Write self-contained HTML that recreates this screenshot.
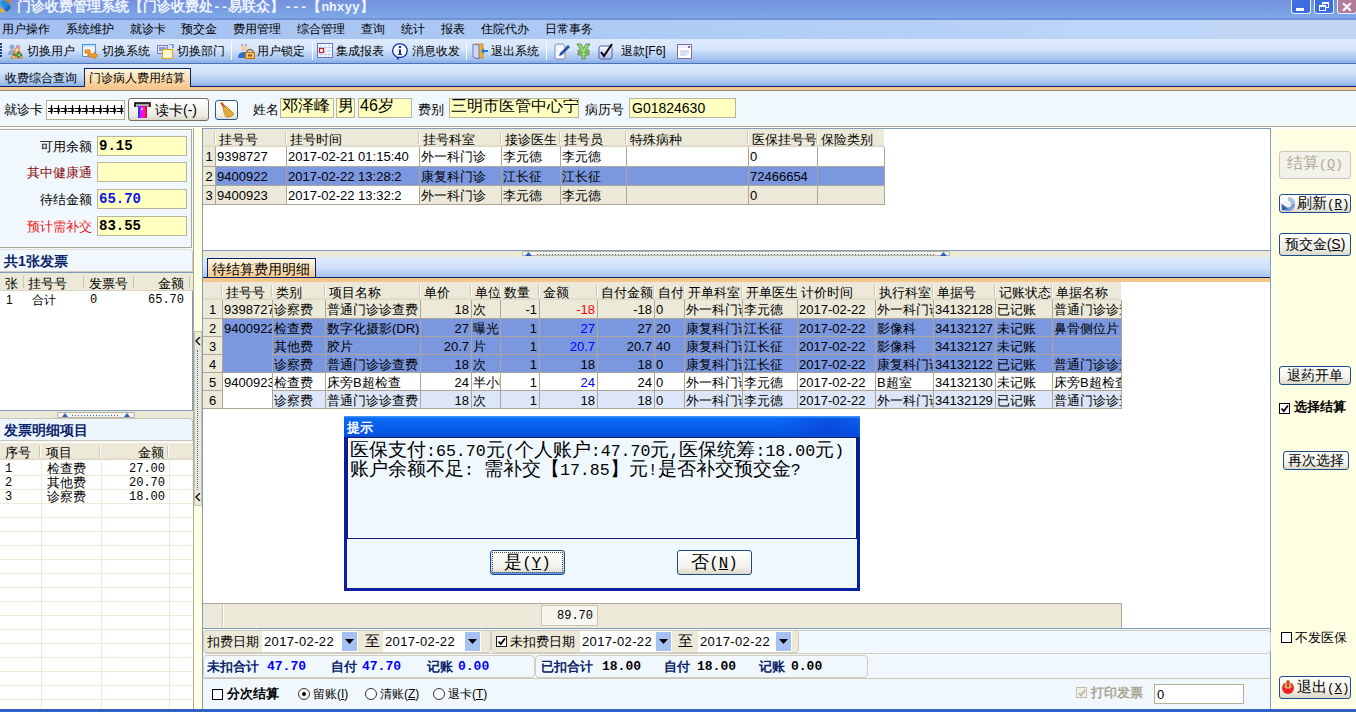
<!DOCTYPE html><html><head><meta charset="utf-8"><style>
*{margin:0;padding:0;box-sizing:border-box}
html,body{width:1356px;height:712px;overflow:hidden;background:#F0F7FD;font-family:"Liberation Sans",sans-serif;font-size:12px;color:#000}
div{position:absolute}
.t{white-space:nowrap;line-height:12px}
.m{font-family:"Liberation Mono",monospace}
</style></head><body>
<div class="" style="left:0px;top:0px;width:1356px;height:18px;background:linear-gradient(#7590DC,#7DA9E6)"></div>
<div class="" style="left:0px;top:18px;width:1356px;height:2px;background:#7191DC"></div>
<svg style="position:absolute;left:0;top:0" width="14" height="14"><path d="M0 2 L5 0 L9 4 L4 9 Z" fill="#1A8FD8"/><path d="M5 0 L10 0 L11 5 Z" fill="#E07A1A"/><path d="M0 8 L4 10 L5 13 L0 12 Z" fill="#E0B030"/><path d="M4 9 L9 4 L11 8 L7 12Z" fill="#1E6CC0"/></svg>
<div class="t" style="left:17px;top:-1px;color:#EEF4FF;font-weight:bold;font-size:14px;line-height:14px">门诊收费管理系统【门诊收费处<span class="m" style="font-size:12.8px">--</span>易联众】<span class="m" style="font-size:12.8px">---</span>【<span class="m" style="font-size:12.8px">nhxyy</span>】</div>
<div class="" style="left:1291px;top:0px;width:20px;height:14px;background:#3D6EE0;border:1px solid #E8F0FF;border-top:none;border-radius:0 0 3px 3px"></div>
<div class="" style="left:1314px;top:0px;width:20px;height:14px;background:#3D6EE0;border:1px solid #E8F0FF;border-top:none;border-radius:0 0 3px 3px"></div>
<div class="" style="left:1337px;top:0px;width:20px;height:14px;background:#B47A9A;border:1px solid #E8F0FF;border-top:none;border-radius:0 0 3px 3px"></div>
<div class="" style="left:1296px;top:8px;width:8px;height:3px;background:#fff"></div>
<div class="" style="left:1322px;top:2px;width:7px;height:6px;border:1px solid #fff;border-top-width:2px"></div>
<div class="" style="left:1319px;top:5px;width:7px;height:6px;border:1px solid #fff;border-top-width:2px;background:#3D6EE0"></div>
<div class="t" style="left:1341px;top:0px;color:#fff;font-size:14px;line-height:14px;font-weight:bold">✕</div>
<div class="" style="left:0px;top:20px;width:1356px;height:19px;background:linear-gradient(90deg,#A4C0F0 0%,#AAC6F2 30%,#B0CDF6 55%,#B8D2F7 75%,#BDD5F8 80%,#BDD5F8 89%,#C3D7F5 90%,#C3D7F5 100%)"></div>
<div class="t" style="left:2px;top:23px;">用户操作</div>
<div class="t" style="left:66px;top:23px;">系统维护</div>
<div class="t" style="left:130px;top:23px;">就诊卡</div>
<div class="t" style="left:181px;top:23px;">预交金</div>
<div class="t" style="left:233px;top:23px;">费用管理</div>
<div class="t" style="left:297px;top:23px;">综合管理</div>
<div class="t" style="left:361px;top:23px;">查询</div>
<div class="t" style="left:401px;top:23px;">统计</div>
<div class="t" style="left:441px;top:23px;">报表</div>
<div class="t" style="left:481px;top:23px;">住院代办</div>
<div class="t" style="left:545px;top:23px;">日常事务</div>
<div class="" style="left:0px;top:39px;width:1356px;height:24px;background:linear-gradient(#DFEBFD 0%,#D5E5FB 45%,#C4D9F7 55%,#A9C7F1 80%,#88ADE6 100%)"></div>
<div class="" style="left:0px;top:63px;width:1356px;height:1px;background:#4F72B6"></div>
<div class="t" style="left:27px;top:45px;">切换用户</div>
<div class="t" style="left:102px;top:45px;">切换系统</div>
<div class="t" style="left:177px;top:45px;">切换部门</div>
<div class="t" style="left:257px;top:45px;">用户锁定</div>
<div class="t" style="left:336px;top:45px;">集成报表</div>
<div class="t" style="left:412px;top:45px;">消息收发</div>
<div class="t" style="left:491px;top:45px;">退出系统</div>
<div class="t" style="left:621px;top:45px;">退款[F6]</div>
<div class="" style="left:231px;top:42px;width:1px;height:18px;background:#7E9BD0;border-right:1px solid #fff"></div>
<div class="" style="left:312px;top:42px;width:1px;height:18px;background:#7E9BD0;border-right:1px solid #fff"></div>
<div class="" style="left:466px;top:42px;width:1px;height:18px;background:#7E9BD0;border-right:1px solid #fff"></div>
<div class="" style="left:546px;top:42px;width:1px;height:18px;background:#7E9BD0;border-right:1px solid #fff"></div>
<div class="" style="left:0px;top:43px;width:2px;height:2px;background:#1B3F8C"></div>
<div class="" style="left:0px;top:46px;width:2px;height:2px;background:#1B3F8C"></div>
<div class="" style="left:0px;top:49px;width:2px;height:2px;background:#1B3F8C"></div>
<div class="" style="left:0px;top:52px;width:2px;height:2px;background:#1B3F8C"></div>
<div class="" style="left:0px;top:55px;width:2px;height:2px;background:#1B3F8C"></div>
<svg style="position:absolute;left:7px;top:44px" width="17" height="15" viewBox="0 0 17 15"><circle cx="5" cy="3" r="2.5" fill="#8FA8D0"/><path d="M1 11 Q1 6 5 6 Q8 6 8 9 L8 11Z" fill="#8FA8D0"/><circle cx="11" cy="3" r="2.3" fill="#C8A0C0"/><path d="M4 14 L8 7 L12 7 L15 12 L15 14Z" fill="#FCE8D0" stroke="#E07A20" stroke-width="1.2"/><circle cx="10" cy="6" r="2.2" fill="#FCE0C0" stroke="#E07A20"/><path d="M7 10 H11 V8 L15 11 L11 14 V12 H7Z" fill="#7CD860" stroke="#2A4A1A" stroke-width=".9"/></svg>
<svg style="position:absolute;left:82px;top:44px" width="17" height="16" viewBox="0 0 17 16"><rect x=".5" y=".5" width="13" height="12" fill="#F3F2EC" stroke="#3C96F0"/><rect x="1" y="1" width="12" height="2" fill="#C8E0FA"/><path d="M3 6 H8 V10 H12 V8 L16 11.5 L12 15 V13 H6 V9 H3Z" fill="#F0A030" stroke="#D07010" stroke-width=".8"/></svg>
<svg style="position:absolute;left:157px;top:44px" width="17" height="15" viewBox="0 0 17 15"><rect x=".5" y="1.5" width="10" height="8" fill="#DDE6F8" stroke="#8C78B8"/><path d="M2 4 H9 M2 6 H7" stroke="#3060C8"/><rect x="5.5" y="5.5" width="10" height="9" fill="#FFF4B0" stroke="#E0A020"/><path d="M8 8 V14 M11 8 V14 M6 11 H15" stroke="#fff"/><path d="M12 0 L16 0 L16 4" stroke="#3060C8" fill="none"/></svg>
<svg style="position:absolute;left:238px;top:43px" width="17" height="16" viewBox="0 0 17 16"><circle cx="6" cy="5" r="3" fill="#F4C8A8"/><path d="M3 3 Q6 -1 9 3 L9 2 Q6 0 3 2Z" fill="#5A2040"/><path d="M0 15 Q0 9 6 9 Q10 9 11 13 L11 15Z" fill="#2E6FC8"/><path d="M9 10 V8 Q12 5 15 8 V10" stroke="#8A6A40" fill="none" stroke-width="1.3"/><rect x="7.5" y="9.5" width="9" height="6" fill="#F8C060" stroke="#C07010"/><rect x="10" y="11.5" width="4" height="2" fill="#8A5A20"/></svg>
<svg style="position:absolute;left:317px;top:43px" width="17" height="16" viewBox="0 0 17 16"><rect x=".5" y=".5" width="15" height="14" fill="#fff" stroke="#7070C0"/><path d="M4 1 V14 M8 1 V14 M12 1 V14 M1 4.5 H15 M1 8 H15 M1 11.5 H15" stroke="#C0D0F0"/><rect x="2.5" y="5.5" width="4" height="4" fill="#fff" stroke="#C02020" stroke-width="1.2"/></svg>
<svg style="position:absolute;left:392px;top:43px" width="16" height="17" viewBox="0 0 16 17"><path d="M8 .8 A7 6.8 0 1 1 6.5 14.2 L6 16 L4.5 13.6 A7 6.8 0 0 1 8 .8Z" fill="#fff" stroke="#1234A8" stroke-width="1.3"/><circle cx="8" cy="4" r="1.3" fill="#1234A8"/><path d="M6.5 6.5 H9 V11 H10 V12 H6 V11 H7 V7.5 H6.5Z" fill="#1234A8"/></svg>
<svg style="position:absolute;left:472px;top:43px" width="16" height="17" viewBox="0 0 16 17"><rect x="4" y="1" width="7" height="14" fill="#F0B030" stroke="#C09040"/><path d="M1 1 L7 2 L7 16 L1 14Z" fill="#C8DCF8" stroke="#8070A8"/><path d="M9 8 L12 5 V7 H16 V9 H12 V11Z" fill="#1E7CE0"/></svg>
<svg style="position:absolute;left:553px;top:43px" width="17" height="17" viewBox="0 0 17 17"><path d="M2 3 Q2 1 4 1 L10 1 L12 3 L12 15 Q12 16 11 16 L3 16 Q2 16 2 15Z" fill="#F4F6FA" stroke="#7A90B8"/><path d="M6 13 L7 10 L15 2 L17 4 L9 12Z" fill="#2A50A0"/></svg>
<svg style="position:absolute;left:576px;top:43px" width="15" height="17" viewBox="0 0 15 17"><path d="M1 1 H5 L7.5 5.5 L10 1 H14 L10 7 H13 V9 H9 V10 H13 V12 H9 V16 H6 V12 H2 V10 H6 V9 H2 V7 H5Z" fill="#90E070" stroke="#5A7A40" stroke-width=".8"/></svg>
<svg style="position:absolute;left:598px;top:43px" width="16" height="17" viewBox="0 0 16 17"><rect x="1" y="3" width="13" height="13" rx="2" fill="url(#gcb)" stroke="#4A60A8"/><defs><linearGradient id="gcb" x1="0" y1="0" x2="0" y2="1"><stop offset="0" stop-color="#fff"/><stop offset="1" stop-color="#A8B8E8"/></linearGradient></defs><path d="M3 9 L6 13 L14 1" stroke="#000" stroke-width="2" fill="none"/></svg>
<svg style="position:absolute;left:677px;top:43px" width="16" height="17" viewBox="0 0 16 17"><rect x=".5" y="1.5" width="14" height="14" fill="#fff" stroke="#8070A8"/><rect x="1" y="2" width="13" height="3" fill="#F0EEF8"/><rect x="11" y="3" width="2" height="2" fill="#8070A8"/><path d="M3 8 H12 M3 10 H12 M3 12 H10" stroke="#A8C0E8"/></svg>
<div class="" style="left:0px;top:64px;width:1356px;height:22px;background:linear-gradient(#DCE9FC 0%,#D0E1FA 40%,#B2CDF3 75%,#8AAFE8 100%)"></div>
<div class="" style="left:0px;top:86px;width:1356px;height:1px;background:#0A246A"></div>
<div class="" style="left:0px;top:87px;width:1356px;height:3px;background:#F4C88C"></div>
<div class="" style="left:0px;top:90px;width:1356px;height:1px;background:#8D8C7C"></div>
<div class="t" style="left:5px;top:72px;font-size:12px">收费综合查询</div>
<div class="" style="left:84px;top:68px;width:107px;height:19px;background:linear-gradient(#FFF6E2,#F8C98E);border:1px solid #0A246A;border-bottom:none"></div>
<div class="t" style="left:89px;top:72px;">门诊病人费用结算</div>
<div class="t" style="left:4px;top:103px;font-size:13px;line-height:13px">就诊卡</div>
<div class="" style="left:46px;top:100px;width:79px;height:20px;background:#fff;border:1px solid #B6AF98"></div>
<svg style="position:absolute;left:48px;top:105px" width="76" height="9" viewBox="0 0 76 9"><g stroke="#000" stroke-width="1.2" fill="none"><path d="M0 3.5 H76 M0 6.5 H76" stroke-dasharray="4 1.5 1.5 0" stroke-width="1"/><path d="M3.5 0 V9"/><path d="M10.5 0 V9"/><path d="M17.5 0 V9"/><path d="M24.5 0 V9"/><path d="M31.5 0 V9"/><path d="M38.5 0 V9"/><path d="M45.5 0 V9"/><path d="M52.5 0 V9"/><path d="M59.5 0 V9"/><path d="M66.5 0 V9"/><path d="M73.5 0 V9"/></g><g fill="#000"><rect x="2.5" y="3" width="2.2" height="4"/><rect x="9.5" y="3" width="2.2" height="4"/><rect x="16.5" y="3" width="2.2" height="4"/><rect x="23.5" y="3" width="2.2" height="4"/><rect x="30.5" y="3" width="2.2" height="4"/><rect x="37.5" y="3" width="2.2" height="4"/><rect x="44.5" y="3" width="2.2" height="4"/><rect x="51.5" y="3" width="2.2" height="4"/><rect x="58.5" y="3" width="2.2" height="4"/><rect x="65.5" y="3" width="2.2" height="4"/><rect x="72.5" y="3" width="2.2" height="4"/></g></svg>
<div class="" style="left:128px;top:98px;width:81px;height:23px;background:linear-gradient(#FFFFFF,#ECEBE3 80%,#D8D5C8);border:1px solid #706E5E;border-radius:3px"></div>
<div class="t" style="left:155px;top:103px;font-size:14px;line-height:14px">读卡(-)</div>
<svg style="position:absolute;left:134px;top:102px" width="17" height="17" viewBox="0 0 17 17"><path d="M1 5 V1 H16 V5" stroke="#000" stroke-width="1.5" fill="#909090"/><rect x="2" y="2" width="13" height="2" fill="#A8A8A8"/><rect x="4" y="4" width="9" height="12" fill="#F010F0"/><rect x="4" y="4" width="2" height="12" fill="#2040F0"/><rect x="11" y="4" width="2" height="12" fill="#F01010"/><circle cx="8" cy="7" r="1.2" fill="#C0C0C0"/><circle cx="15" cy="2" r=".8" fill="#E00"/></svg>
<div class="" style="left:215px;top:100px;width:23px;height:20px;background:linear-gradient(#FFFFFF,#F2F1EA 70%,#E2DFD2);border:1px solid #2C5598;border-radius:3px"></div>
<svg style="position:absolute;left:218px;top:102px" width="17" height="16" viewBox="0 0 17 16"><path d="M2 1 L4 0 L8 5 L6 7Z" fill="#C06020"/><path d="M5 6 L8 4 L16 12 Q13 16 8 15 Q6 12 5 6Z" fill="#E8B040" stroke="#B08020" stroke-width=".7"/><path d="M7 9 L12 14 M9 7 L14 12" stroke="#B08020" stroke-width=".6"/></svg>
<div class="t" style="left:253px;top:103px;font-size:13px;line-height:13px">姓名</div>
<div class="" style="left:280px;top:98px;width:54px;height:20px;background:#FFFFC0;border:1px solid #B9B59E"></div>
<div class="t" style="left:282px;top:98px;font-size:16px;line-height:16px">邓泽峰</div>
<div class="" style="left:336px;top:98px;width:19px;height:20px;background:#FFFFC0;border:1px solid #B9B59E"></div>
<div class="t" style="left:338px;top:98px;font-size:16px;line-height:16px">男</div>
<div class="" style="left:358px;top:98px;width:54px;height:20px;background:#FFFFC0;border:1px solid #B9B59E"></div>
<div class="t" style="left:360px;top:98px;font-size:16px;line-height:16px">46岁</div>
<div class="t" style="left:418px;top:103px;font-size:13px;line-height:13px">费别</div>
<div class="" style="left:449px;top:98px;width:130px;height:20px;background:#FFFFC0;border:1px solid #B9B59E;overflow:hidden"><div class="t" style="left:1px;top:-1px;font-size:16px;line-height:16px">三明市医管中心宁化</div></div>
<div class="t" style="left:585px;top:103px;font-size:13px;line-height:13px">病历号</div>
<div class="" style="left:629px;top:98px;width:107px;height:20px;background:#FFFFC0;border:1px solid #B9B59E"></div>
<div class="t" style="left:632px;top:101px;font-size:14px;line-height:14px">G01824630</div>
<div class="" style="left:0px;top:126px;width:1356px;height:1px;background:#ACA892"></div>
<div class="" style="left:0px;top:127px;width:1356px;height:1px;background:#FFFFFF"></div>
<div class="" style="left:0px;top:129px;width:192px;height:119px;background:#F0F7FD;border:1px solid #ACA899;border-left:none;box-shadow:inset 0 1px #fff"></div>
<div class="t" style="left:0px;top:140px;width:92px;text-align:right;font-size:13px;line-height:13px;color:#000">可用余额</div>
<div class="" style="left:97px;top:136px;width:90px;height:20px;background:#FFFFC0;border:1px solid #B9B59E"></div>
<div class="t m" style="left:99px;top:139px;color:#000;font-weight:bold;font-size:14px;line-height:14px">9.15</div>
<div class="t" style="left:0px;top:166px;width:92px;text-align:right;font-size:13px;line-height:13px;color:#8B0A0A">其中健康通</div>
<div class="" style="left:97px;top:162px;width:90px;height:20px;background:#FFFFC0;border:1px solid #B9B59E"></div>
<div class="t m" style="left:99px;top:165px;color:#000;font-weight:bold;font-size:14px;line-height:14px"></div>
<div class="t" style="left:0px;top:193px;width:92px;text-align:right;font-size:13px;line-height:13px;color:#000">待结金额</div>
<div class="" style="left:97px;top:189px;width:90px;height:20px;background:#FFFFC0;border:1px solid #B9B59E"></div>
<div class="t m" style="left:99px;top:192px;color:#0A14E6;font-weight:bold;font-size:14px;line-height:14px">65.70</div>
<div class="t" style="left:0px;top:220px;width:92px;text-align:right;font-size:13px;line-height:13px;color:#F01010">预计需补交</div>
<div class="" style="left:97px;top:216px;width:90px;height:20px;background:#FFFFC0;border:1px solid #B9B59E"></div>
<div class="t m" style="left:99px;top:219px;color:#000;font-weight:bold;font-size:14px;line-height:14px">83.55</div>
<div class="" style="left:0px;top:249px;width:193px;height:23px;background:#F0F7FD;border:1px solid #CFCCBD;border-left:none;border-top-color:#E4E2D8;border-radius:0 4px 0 0"></div>
<div class="t" style="left:4px;top:254px;color:#0A246A;font-weight:bold;font-size:14px;line-height:14px">共1张发票</div>
<div class="" style="left:0px;top:272px;width:193px;height:139px;background:#fff;border-top:1px solid #7F9DB9;border-right:1px solid #7F9DB9;border-bottom:1px solid #7F9DB9"></div>
<div class="" style="left:0px;top:273px;width:193px;height:18px;background:#ECE9D8;border-bottom:1px solid #D8D4C0"></div>
<div class="t" style="left:5px;top:277px;font-size:13px;line-height:13px">张</div>
<div class="t" style="left:28px;top:277px;font-size:13px;line-height:13px">挂号号</div>
<div class="t" style="left:89px;top:277px;font-size:13px;line-height:13px">发票号</div>
<div class="t" style="left:158px;top:277px;font-size:13px;line-height:13px">金额</div>
<div class="" style="left:23px;top:276px;width:1px;height:12px;background:#C8C5B0"></div>
<div class="" style="left:83px;top:276px;width:1px;height:12px;background:#C8C5B0"></div>
<div class="" style="left:133px;top:276px;width:1px;height:12px;background:#C8C5B0"></div>
<div class="" style="left:189px;top:276px;width:1px;height:12px;background:#C8C5B0"></div>
<div class="t" style="left:6px;top:294px;">1</div>
<div class="t" style="left:32px;top:294px;">合计</div>
<div class="t m" style="left:90px;top:294px;">0</div>
<div class="t m" style="left:148px;top:294px;">65.70</div>
<div class="" style="left:0px;top:411px;width:193px;height:7px;background:#ECE9D8"></div>
<div class="" style="left:57px;top:412px;width:78px;height:6px;border:1px solid #B9B6A4;background:#F4F3EC"></div>
<svg style="position:absolute;left:62px;top:413px" width="68" height="4" viewBox="0 0 68 4"><path d="M0 4 L3 0 L6 4Z M62 4 L65 0 L68 4Z" fill="#2F5FC8"/><path d="M10 2.5 H58" stroke="#3A6AD0" stroke-dasharray="1 2"/></svg>
<div class="" style="left:0px;top:418px;width:193px;height:23px;background:#EEF6FD;border:1px solid #C9C6B4;border-left:none;border-radius:0 4px 0 0"></div>
<div class="t" style="left:4px;top:423px;color:#0A246A;font-weight:bold;font-size:14px;line-height:14px">发票明细项目</div>
<div class="" style="left:0px;top:442px;width:194px;height:267px;background:#fff;border-right:1px solid #7F9DB9"></div>
<div class="" style="left:0px;top:443px;width:193px;height:17px;background:linear-gradient(#ECE9D8 85%,#D9D5C2)"></div>
<div class="t" style="left:5px;top:446px;font-size:13px;line-height:13px">序号</div>
<div class="t" style="left:46px;top:446px;font-size:13px;line-height:13px">项目</div>
<div class="t" style="left:138px;top:446px;font-size:13px;line-height:13px">金额</div>
<div class="" style="left:39px;top:446px;width:2px;height:11px;background:#CBC7B2;border-right:1px solid #fff"></div>
<div class="" style="left:99px;top:446px;width:2px;height:11px;background:#CBC7B2;border-right:1px solid #fff"></div>
<div class="" style="left:167px;top:446px;width:2px;height:11px;background:#CBC7B2;border-right:1px solid #fff"></div>
<div class="t m" style="left:5px;top:463px;font-size:12px;line-height:12px">1</div>
<div class="t" style="left:47px;top:462px;font-size:13px;line-height:13px">检查费</div>
<div class="t m" style="left:129px;top:463px;font-size:12px;line-height:12px">27.00</div>
<div class="t m" style="left:5px;top:477px;font-size:12px;line-height:12px">2</div>
<div class="t" style="left:47px;top:476px;font-size:13px;line-height:13px">其他费</div>
<div class="t m" style="left:129px;top:477px;font-size:12px;line-height:12px">20.70</div>
<div class="t m" style="left:5px;top:491px;font-size:12px;line-height:12px">3</div>
<div class="t" style="left:47px;top:490px;font-size:13px;line-height:13px">诊察费</div>
<div class="t m" style="left:129px;top:491px;font-size:12px;line-height:12px">18.00</div>
<div class="" style="left:0px;top:475px;width:193px;height:1px;background:#EDEAD9"></div>
<div class="" style="left:0px;top:489px;width:193px;height:1px;background:#EDEAD9"></div>
<div class="" style="left:0px;top:503px;width:193px;height:1px;background:#EDEAD9"></div>
<div class="" style="left:0px;top:517px;width:193px;height:1px;background:#EDEAD9"></div>
<div class="" style="left:0px;top:531px;width:193px;height:1px;background:#EDEAD9"></div>
<div class="" style="left:0px;top:545px;width:193px;height:1px;background:#EDEAD9"></div>
<div class="" style="left:0px;top:559px;width:193px;height:1px;background:#EDEAD9"></div>
<div class="" style="left:0px;top:573px;width:193px;height:1px;background:#EDEAD9"></div>
<div class="" style="left:0px;top:587px;width:193px;height:1px;background:#EDEAD9"></div>
<div class="" style="left:0px;top:601px;width:193px;height:1px;background:#EDEAD9"></div>
<div class="" style="left:0px;top:615px;width:193px;height:1px;background:#EDEAD9"></div>
<div class="" style="left:0px;top:629px;width:193px;height:1px;background:#EDEAD9"></div>
<div class="" style="left:0px;top:643px;width:193px;height:1px;background:#EDEAD9"></div>
<div class="" style="left:0px;top:657px;width:193px;height:1px;background:#EDEAD9"></div>
<div class="" style="left:0px;top:671px;width:193px;height:1px;background:#EDEAD9"></div>
<div class="" style="left:0px;top:685px;width:193px;height:1px;background:#EDEAD9"></div>
<div class="" style="left:0px;top:699px;width:193px;height:1px;background:#EDEAD9"></div>
<div class="" style="left:41px;top:460px;width:1px;height:249px;background:#EDEAD9"></div>
<div class="" style="left:101px;top:460px;width:1px;height:249px;background:#EDEAD9"></div>
<div class="" style="left:169px;top:460px;width:1px;height:249px;background:#EDEAD9"></div>
<div class="" style="left:194px;top:128px;width:8px;height:581px;background:#FFFFE3"></div>
<div class="" style="left:193px;top:128px;width:1px;height:581px;background:#ACA899"></div>
<div class="" style="left:194px;top:331px;width:8px;height:175px;background:#ECE9D8;border:1px solid #C9C6B4"></div>
<div class="" style="left:197px;top:350px;width:1px;height:140px;border-left:1px dotted #3A6AD0"></div>
<svg style="position:absolute;left:195px;top:337px" width="6" height="8" viewBox="0 0 6 8"><path d="M5 0 L1 4 L5 8" stroke="#000" stroke-width="1.3" fill="none"/></svg>
<svg style="position:absolute;left:195px;top:493px" width="6" height="8" viewBox="0 0 6 8"><path d="M5 0 L1 4 L5 8" stroke="#000" stroke-width="1.3" fill="none"/></svg>
<div class="" style="left:202px;top:128px;width:1069px;height:581px;background:#F0F7FD;border-left:1px solid #7F9DB9;border-right:1px solid #7F9DB9"></div>
<div class="" style="left:202px;top:128px;width:1069px;height:123px;background:#fff;border:1px solid #7F9DB9"></div>
<div class="" style="left:203px;top:129px;width:681px;height:18px;background:linear-gradient(#ECE9D8 85%,#D9D5C2)"></div>
<div class="" style="left:214px;top:132px;width:1px;height:12px;background:#CBC7B2;border-right:1px solid #fff;width:2px"></div>
<div class="t" style="left:219px;top:133px;font-size:13px;line-height:13px">挂号号</div>
<div class="" style="left:285px;top:132px;width:1px;height:12px;background:#CBC7B2;border-right:1px solid #fff;width:2px"></div>
<div class="t" style="left:290px;top:133px;font-size:13px;line-height:13px">挂号时间</div>
<div class="" style="left:418px;top:132px;width:1px;height:12px;background:#CBC7B2;border-right:1px solid #fff;width:2px"></div>
<div class="t" style="left:423px;top:133px;font-size:13px;line-height:13px">挂号科室</div>
<div class="" style="left:500px;top:132px;width:1px;height:12px;background:#CBC7B2;border-right:1px solid #fff;width:2px"></div>
<div class="t" style="left:505px;top:133px;font-size:13px;line-height:13px">接诊医生</div>
<div class="" style="left:559px;top:132px;width:1px;height:12px;background:#CBC7B2;border-right:1px solid #fff;width:2px"></div>
<div class="t" style="left:564px;top:133px;font-size:13px;line-height:13px">挂号员</div>
<div class="" style="left:625px;top:132px;width:1px;height:12px;background:#CBC7B2;border-right:1px solid #fff;width:2px"></div>
<div class="t" style="left:630px;top:133px;font-size:13px;line-height:13px">特殊病种</div>
<div class="" style="left:747px;top:132px;width:1px;height:12px;background:#CBC7B2;border-right:1px solid #fff;width:2px"></div>
<div class="t" style="left:752px;top:133px;font-size:13px;line-height:13px">医保挂号号</div>
<div class="" style="left:816px;top:132px;width:1px;height:12px;background:#CBC7B2;border-right:1px solid #fff;width:2px"></div>
<div class="t" style="left:821px;top:133px;font-size:13px;line-height:13px">保险类别</div>
<div class="" style="left:203px;top:147px;width:12px;height:19px;background:#ECE9D8"></div>
<div class="" style="left:216px;top:147px;width:70px;height:19px;background:#fff"></div>
<div class="" style="left:287px;top:147px;width:132px;height:19px;background:#fff"></div>
<div class="" style="left:420px;top:147px;width:81px;height:19px;background:#fff"></div>
<div class="" style="left:502px;top:147px;width:58px;height:19px;background:#fff"></div>
<div class="" style="left:561px;top:147px;width:65px;height:19px;background:#fff"></div>
<div class="" style="left:627px;top:147px;width:121px;height:19px;background:#fff"></div>
<div class="" style="left:749px;top:147px;width:68px;height:19px;background:#fff"></div>
<div class="" style="left:818px;top:147px;width:66px;height:19px;background:#fff"></div>
<div class="" style="left:203px;top:167px;width:12px;height:18px;background:#ECE9D8"></div>
<div class="" style="left:216px;top:167px;width:70px;height:18px;background:#7A97DF"></div>
<div class="" style="left:287px;top:167px;width:132px;height:18px;background:#7A97DF"></div>
<div class="" style="left:420px;top:167px;width:81px;height:18px;background:#7A97DF"></div>
<div class="" style="left:502px;top:167px;width:58px;height:18px;background:#7A97DF"></div>
<div class="" style="left:561px;top:167px;width:65px;height:18px;background:#7A97DF"></div>
<div class="" style="left:627px;top:167px;width:121px;height:18px;background:#7A97DF"></div>
<div class="" style="left:749px;top:167px;width:68px;height:18px;background:#7A97DF"></div>
<div class="" style="left:818px;top:167px;width:66px;height:18px;background:#7A97DF"></div>
<div class="" style="left:203px;top:186px;width:12px;height:18px;background:#ECE9D8"></div>
<div class="" style="left:216px;top:186px;width:70px;height:18px;background:#ECE9D8"></div>
<div class="" style="left:287px;top:186px;width:132px;height:18px;background:#fff"></div>
<div class="" style="left:420px;top:186px;width:81px;height:18px;background:#ECE9D8"></div>
<div class="" style="left:502px;top:186px;width:58px;height:18px;background:#ECE9D8"></div>
<div class="" style="left:561px;top:186px;width:65px;height:18px;background:#ECE9D8"></div>
<div class="" style="left:627px;top:186px;width:121px;height:18px;background:#ECE9D8"></div>
<div class="" style="left:749px;top:186px;width:68px;height:18px;background:#ECE9D8"></div>
<div class="" style="left:818px;top:186px;width:66px;height:18px;background:#ECE9D8"></div>
<div class="" style="left:215px;top:147px;width:1px;height:58px;background:#ACA899"></div>
<div class="" style="left:286px;top:147px;width:1px;height:58px;background:#ACA899"></div>
<div class="" style="left:419px;top:147px;width:1px;height:58px;background:#ACA899"></div>
<div class="" style="left:501px;top:147px;width:1px;height:58px;background:#ACA899"></div>
<div class="" style="left:560px;top:147px;width:1px;height:58px;background:#ACA899"></div>
<div class="" style="left:626px;top:147px;width:1px;height:58px;background:#ACA899"></div>
<div class="" style="left:748px;top:147px;width:1px;height:58px;background:#ACA899"></div>
<div class="" style="left:817px;top:147px;width:1px;height:58px;background:#ACA899"></div>
<div class="" style="left:884px;top:147px;width:1px;height:58px;background:#ACA899"></div>
<div class="" style="left:203px;top:166px;width:682px;height:1px;background:#ACA899"></div>
<div class="" style="left:203px;top:185px;width:682px;height:1px;background:#ACA899"></div>
<div class="" style="left:203px;top:204px;width:682px;height:1px;background:#ACA899"></div>
<div class="t" style="left:203px;top:150px;width:12px;text-align:center;overflow:hidden;font-size:13px;line-height:13px;color:#000">1</div>
<div class="t" style="left:217px;top:150px;width:69px;overflow:hidden;font-size:13px;line-height:13px;color:#000">9398727</div>
<div class="t" style="left:288px;top:150px;width:131px;overflow:hidden;font-size:13px;line-height:13px;color:#000">2017-02-21 01:15:40</div>
<div class="t" style="left:421px;top:150px;width:80px;overflow:hidden;font-size:13px;line-height:13px;color:#000">外一科门诊</div>
<div class="t" style="left:503px;top:150px;width:57px;overflow:hidden;font-size:13px;line-height:13px;color:#000">李元德</div>
<div class="t" style="left:562px;top:150px;width:64px;overflow:hidden;font-size:13px;line-height:13px;color:#000">李元德</div>
<div class="t" style="left:750px;top:150px;width:67px;overflow:hidden;font-size:13px;line-height:13px;color:#000">0</div>
<div class="t" style="left:203px;top:170px;width:12px;text-align:center;overflow:hidden;font-size:13px;line-height:13px;color:#000">2</div>
<div class="t" style="left:217px;top:170px;width:69px;overflow:hidden;font-size:13px;line-height:13px;color:#000">9400922</div>
<div class="t" style="left:288px;top:170px;width:131px;overflow:hidden;font-size:13px;line-height:13px;color:#000">2017-02-22 13:28:2</div>
<div class="t" style="left:421px;top:170px;width:80px;overflow:hidden;font-size:13px;line-height:13px;color:#000">康复科门诊</div>
<div class="t" style="left:503px;top:170px;width:57px;overflow:hidden;font-size:13px;line-height:13px;color:#000">江长征</div>
<div class="t" style="left:562px;top:170px;width:64px;overflow:hidden;font-size:13px;line-height:13px;color:#000">江长征</div>
<div class="t" style="left:750px;top:170px;width:67px;overflow:hidden;font-size:13px;line-height:13px;color:#000">72466654</div>
<div class="t" style="left:203px;top:189px;width:12px;text-align:center;overflow:hidden;font-size:13px;line-height:13px;color:#000">3</div>
<div class="t" style="left:217px;top:189px;width:69px;overflow:hidden;font-size:13px;line-height:13px;color:#000">9400923</div>
<div class="t" style="left:288px;top:189px;width:131px;overflow:hidden;font-size:13px;line-height:13px;color:#000">2017-02-22 13:32:2</div>
<div class="t" style="left:421px;top:189px;width:80px;overflow:hidden;font-size:13px;line-height:13px;color:#000">外一科门诊</div>
<div class="t" style="left:503px;top:189px;width:57px;overflow:hidden;font-size:13px;line-height:13px;color:#000">李元德</div>
<div class="t" style="left:562px;top:189px;width:64px;overflow:hidden;font-size:13px;line-height:13px;color:#000">李元德</div>
<div class="t" style="left:750px;top:189px;width:67px;overflow:hidden;font-size:13px;line-height:13px;color:#000">0</div>
<div class="" style="left:203px;top:251px;width:1067px;height:6px;background:#ECE9D8"></div>
<div class="" style="left:522px;top:251px;width:428px;height:5px;border:1px solid #B9B6A4;background:#F4F3EC"></div>
<svg style="position:absolute;left:525px;top:252px" width="422" height="4" viewBox="0 0 422 4"><path d="M0 4 L3.5 0 L7 4Z M415 4 L418.5 0 L422 4Z" fill="#2F5FC8"/><path d="M12 2.5 H410" stroke="#3A6AD0" stroke-dasharray="1 2"/></svg>
<div class="" style="left:203px;top:257px;width:1067px;height:24px;background:linear-gradient(#E0ECFC 0%,#CFE0FA 45%,#A9C6F2 80%,#8EB2EA 100%)"></div>
<div class="" style="left:203px;top:277px;width:1067px;height:1px;background:#0A246A"></div>
<div class="" style="left:203px;top:278px;width:1067px;height:4px;background:#F4C88C"></div>
<div class="" style="left:207px;top:258px;width:109px;height:19px;background:linear-gradient(#FFF6E2,#F8C98E);border:1px solid #0A246A;border-bottom:none"></div>
<div class="t" style="left:212px;top:262px;font-size:14px;line-height:14px">待结算费用明细</div>
<div class="" style="left:203px;top:282px;width:1067px;height:346px;background:#fff"></div>
<div class="" style="left:203px;top:282px;width:918px;height:18px;background:linear-gradient(#ECE9D8 85%,#D9D5C2)"></div>
<div class="" style="left:221px;top:285px;width:1px;height:12px;background:#CBC7B2;border-right:1px solid #fff;width:2px"></div>
<div class="t" style="left:226px;top:286px;font-size:13px;line-height:13px">挂号号</div>
<div class="" style="left:271px;top:285px;width:1px;height:12px;background:#CBC7B2;border-right:1px solid #fff;width:2px"></div>
<div class="t" style="left:276px;top:286px;font-size:13px;line-height:13px">类别</div>
<div class="" style="left:324px;top:285px;width:1px;height:12px;background:#CBC7B2;border-right:1px solid #fff;width:2px"></div>
<div class="t" style="left:329px;top:286px;font-size:13px;line-height:13px">项目名称</div>
<div class="" style="left:419px;top:285px;width:1px;height:12px;background:#CBC7B2;border-right:1px solid #fff;width:2px"></div>
<div class="t" style="left:424px;top:286px;font-size:13px;line-height:13px">单价</div>
<div class="" style="left:470px;top:285px;width:1px;height:12px;background:#CBC7B2;border-right:1px solid #fff;width:2px"></div>
<div class="t" style="left:475px;top:286px;font-size:13px;line-height:13px">单位</div>
<div class="" style="left:499px;top:285px;width:1px;height:12px;background:#CBC7B2;border-right:1px solid #fff;width:2px"></div>
<div class="t" style="left:504px;top:286px;font-size:13px;line-height:13px">数量</div>
<div class="" style="left:538px;top:285px;width:1px;height:12px;background:#CBC7B2;border-right:1px solid #fff;width:2px"></div>
<div class="t" style="left:543px;top:286px;font-size:13px;line-height:13px">金额</div>
<div class="" style="left:596px;top:285px;width:1px;height:12px;background:#CBC7B2;border-right:1px solid #fff;width:2px"></div>
<div class="t" style="left:601px;top:286px;font-size:13px;line-height:13px">自付金额</div>
<div class="" style="left:653px;top:285px;width:1px;height:12px;background:#CBC7B2;border-right:1px solid #fff;width:2px"></div>
<div class="t" style="left:658px;top:286px;font-size:13px;line-height:13px">自付</div>
<div class="" style="left:683px;top:285px;width:1px;height:12px;background:#CBC7B2;border-right:1px solid #fff;width:2px"></div>
<div class="t" style="left:688px;top:286px;font-size:13px;line-height:13px">开单科室</div>
<div class="" style="left:741px;top:285px;width:1px;height:12px;background:#CBC7B2;border-right:1px solid #fff;width:2px"></div>
<div class="t" style="left:746px;top:286px;font-size:13px;line-height:13px">开单医生</div>
<div class="" style="left:796px;top:285px;width:1px;height:12px;background:#CBC7B2;border-right:1px solid #fff;width:2px"></div>
<div class="t" style="left:801px;top:286px;font-size:13px;line-height:13px">计价时间</div>
<div class="" style="left:874px;top:285px;width:1px;height:12px;background:#CBC7B2;border-right:1px solid #fff;width:2px"></div>
<div class="t" style="left:879px;top:286px;font-size:13px;line-height:13px">执行科室</div>
<div class="" style="left:932px;top:285px;width:1px;height:12px;background:#CBC7B2;border-right:1px solid #fff;width:2px"></div>
<div class="t" style="left:937px;top:286px;font-size:13px;line-height:13px">单据号</div>
<div class="" style="left:994px;top:285px;width:1px;height:12px;background:#CBC7B2;border-right:1px solid #fff;width:2px"></div>
<div class="t" style="left:999px;top:286px;font-size:13px;line-height:13px">记账状态</div>
<div class="" style="left:1051px;top:285px;width:1px;height:12px;background:#CBC7B2;border-right:1px solid #fff;width:2px"></div>
<div class="t" style="left:1056px;top:286px;font-size:13px;line-height:13px">单据名称</div>
<div class="" style="left:203px;top:300px;width:19px;height:18px;background:#ECE9D8"></div>
<div class="" style="left:223px;top:300px;width:49px;height:18px;background:#ECE9D8"></div>
<div class="" style="left:273px;top:300px;width:52px;height:18px;background:#ECE9D8"></div>
<div class="" style="left:326px;top:300px;width:94px;height:18px;background:#ECE9D8"></div>
<div class="" style="left:421px;top:300px;width:50px;height:18px;background:#ECE9D8"></div>
<div class="" style="left:472px;top:300px;width:28px;height:18px;background:#ECE9D8"></div>
<div class="" style="left:501px;top:300px;width:38px;height:18px;background:#ECE9D8"></div>
<div class="" style="left:540px;top:300px;width:57px;height:18px;background:#ECE9D8"></div>
<div class="" style="left:598px;top:300px;width:56px;height:18px;background:#ECE9D8"></div>
<div class="" style="left:655px;top:300px;width:29px;height:18px;background:#ECE9D8"></div>
<div class="" style="left:685px;top:300px;width:57px;height:18px;background:#ECE9D8"></div>
<div class="" style="left:743px;top:300px;width:54px;height:18px;background:#ECE9D8"></div>
<div class="" style="left:798px;top:300px;width:77px;height:18px;background:#ECE9D8"></div>
<div class="" style="left:876px;top:300px;width:57px;height:18px;background:#ECE9D8"></div>
<div class="" style="left:934px;top:300px;width:61px;height:18px;background:#ECE9D8"></div>
<div class="" style="left:996px;top:300px;width:56px;height:18px;background:#ECE9D8"></div>
<div class="" style="left:1053px;top:300px;width:68px;height:18px;background:#ECE9D8"></div>
<div class="" style="left:203px;top:319px;width:19px;height:17px;background:#ECE9D8"></div>
<div class="" style="left:223px;top:319px;width:49px;height:17px;background:#7A97DF"></div>
<div class="" style="left:273px;top:319px;width:52px;height:17px;background:#7A97DF"></div>
<div class="" style="left:326px;top:319px;width:94px;height:17px;background:#7A97DF"></div>
<div class="" style="left:421px;top:319px;width:50px;height:17px;background:#7A97DF"></div>
<div class="" style="left:472px;top:319px;width:28px;height:17px;background:#7A97DF"></div>
<div class="" style="left:501px;top:319px;width:38px;height:17px;background:#7A97DF"></div>
<div class="" style="left:540px;top:319px;width:57px;height:17px;background:#7A97DF"></div>
<div class="" style="left:598px;top:319px;width:56px;height:17px;background:#7A97DF"></div>
<div class="" style="left:655px;top:319px;width:29px;height:17px;background:#7A97DF"></div>
<div class="" style="left:685px;top:319px;width:57px;height:17px;background:#7A97DF"></div>
<div class="" style="left:743px;top:319px;width:54px;height:17px;background:#7A97DF"></div>
<div class="" style="left:798px;top:319px;width:77px;height:17px;background:#7A97DF"></div>
<div class="" style="left:876px;top:319px;width:57px;height:17px;background:#7A97DF"></div>
<div class="" style="left:934px;top:319px;width:61px;height:17px;background:#7A97DF"></div>
<div class="" style="left:996px;top:319px;width:56px;height:17px;background:#7A97DF"></div>
<div class="" style="left:1053px;top:319px;width:68px;height:17px;background:#7A97DF"></div>
<div class="" style="left:203px;top:337px;width:19px;height:17px;background:#ECE9D8"></div>
<div class="" style="left:223px;top:337px;width:49px;height:17px;background:#7A97DF"></div>
<div class="" style="left:273px;top:337px;width:52px;height:17px;background:#7A97DF"></div>
<div class="" style="left:326px;top:337px;width:94px;height:17px;background:#7A97DF"></div>
<div class="" style="left:421px;top:337px;width:50px;height:17px;background:#7A97DF"></div>
<div class="" style="left:472px;top:337px;width:28px;height:17px;background:#7A97DF"></div>
<div class="" style="left:501px;top:337px;width:38px;height:17px;background:#7A97DF"></div>
<div class="" style="left:540px;top:337px;width:57px;height:17px;background:#7A97DF"></div>
<div class="" style="left:598px;top:337px;width:56px;height:17px;background:#7A97DF"></div>
<div class="" style="left:655px;top:337px;width:29px;height:17px;background:#7A97DF"></div>
<div class="" style="left:685px;top:337px;width:57px;height:17px;background:#7A97DF"></div>
<div class="" style="left:743px;top:337px;width:54px;height:17px;background:#7A97DF"></div>
<div class="" style="left:798px;top:337px;width:77px;height:17px;background:#7A97DF"></div>
<div class="" style="left:876px;top:337px;width:57px;height:17px;background:#7A97DF"></div>
<div class="" style="left:934px;top:337px;width:61px;height:17px;background:#7A97DF"></div>
<div class="" style="left:996px;top:337px;width:56px;height:17px;background:#7A97DF"></div>
<div class="" style="left:1053px;top:337px;width:68px;height:17px;background:#7A97DF"></div>
<div class="" style="left:203px;top:355px;width:19px;height:17px;background:#ECE9D8"></div>
<div class="" style="left:223px;top:355px;width:49px;height:17px;background:#7A97DF"></div>
<div class="" style="left:273px;top:355px;width:52px;height:17px;background:#7A97DF"></div>
<div class="" style="left:326px;top:355px;width:94px;height:17px;background:#7A97DF"></div>
<div class="" style="left:421px;top:355px;width:50px;height:17px;background:#7A97DF"></div>
<div class="" style="left:472px;top:355px;width:28px;height:17px;background:#7A97DF"></div>
<div class="" style="left:501px;top:355px;width:38px;height:17px;background:#7A97DF"></div>
<div class="" style="left:540px;top:355px;width:57px;height:17px;background:#7A97DF"></div>
<div class="" style="left:598px;top:355px;width:56px;height:17px;background:#7A97DF"></div>
<div class="" style="left:655px;top:355px;width:29px;height:17px;background:#7A97DF"></div>
<div class="" style="left:685px;top:355px;width:57px;height:17px;background:#7A97DF"></div>
<div class="" style="left:743px;top:355px;width:54px;height:17px;background:#7A97DF"></div>
<div class="" style="left:798px;top:355px;width:77px;height:17px;background:#7A97DF"></div>
<div class="" style="left:876px;top:355px;width:57px;height:17px;background:#7A97DF"></div>
<div class="" style="left:934px;top:355px;width:61px;height:17px;background:#7A97DF"></div>
<div class="" style="left:996px;top:355px;width:56px;height:17px;background:#7A97DF"></div>
<div class="" style="left:1053px;top:355px;width:68px;height:17px;background:#7A97DF"></div>
<div class="" style="left:203px;top:373px;width:19px;height:17px;background:#ECE9D8"></div>
<div class="" style="left:223px;top:373px;width:49px;height:17px;background:#fff"></div>
<div class="" style="left:273px;top:373px;width:52px;height:17px;background:#fff"></div>
<div class="" style="left:326px;top:373px;width:94px;height:17px;background:#fff"></div>
<div class="" style="left:421px;top:373px;width:50px;height:17px;background:#fff"></div>
<div class="" style="left:472px;top:373px;width:28px;height:17px;background:#fff"></div>
<div class="" style="left:501px;top:373px;width:38px;height:17px;background:#fff"></div>
<div class="" style="left:540px;top:373px;width:57px;height:17px;background:#fff"></div>
<div class="" style="left:598px;top:373px;width:56px;height:17px;background:#fff"></div>
<div class="" style="left:655px;top:373px;width:29px;height:17px;background:#fff"></div>
<div class="" style="left:685px;top:373px;width:57px;height:17px;background:#fff"></div>
<div class="" style="left:743px;top:373px;width:54px;height:17px;background:#fff"></div>
<div class="" style="left:798px;top:373px;width:77px;height:17px;background:#fff"></div>
<div class="" style="left:876px;top:373px;width:57px;height:17px;background:#fff"></div>
<div class="" style="left:934px;top:373px;width:61px;height:17px;background:#fff"></div>
<div class="" style="left:996px;top:373px;width:56px;height:17px;background:#fff"></div>
<div class="" style="left:1053px;top:373px;width:68px;height:17px;background:#fff"></div>
<div class="" style="left:203px;top:391px;width:19px;height:17px;background:#ECE9D8"></div>
<div class="" style="left:223px;top:391px;width:49px;height:17px;background:#fff"></div>
<div class="" style="left:273px;top:391px;width:52px;height:17px;background:#DCE6F8"></div>
<div class="" style="left:326px;top:391px;width:94px;height:17px;background:#DCE6F8"></div>
<div class="" style="left:421px;top:391px;width:50px;height:17px;background:#DCE6F8"></div>
<div class="" style="left:472px;top:391px;width:28px;height:17px;background:#DCE6F8"></div>
<div class="" style="left:501px;top:391px;width:38px;height:17px;background:#DCE6F8"></div>
<div class="" style="left:540px;top:391px;width:57px;height:17px;background:#DCE6F8"></div>
<div class="" style="left:598px;top:391px;width:56px;height:17px;background:#DCE6F8"></div>
<div class="" style="left:655px;top:391px;width:29px;height:17px;background:#DCE6F8"></div>
<div class="" style="left:685px;top:391px;width:57px;height:17px;background:#DCE6F8"></div>
<div class="" style="left:743px;top:391px;width:54px;height:17px;background:#DCE6F8"></div>
<div class="" style="left:798px;top:391px;width:77px;height:17px;background:#DCE6F8"></div>
<div class="" style="left:876px;top:391px;width:57px;height:17px;background:#DCE6F8"></div>
<div class="" style="left:934px;top:391px;width:61px;height:17px;background:#DCE6F8"></div>
<div class="" style="left:996px;top:391px;width:56px;height:17px;background:#DCE6F8"></div>
<div class="" style="left:1053px;top:391px;width:68px;height:17px;background:#DCE6F8"></div>
<div class="" style="left:222px;top:300px;width:1px;height:109px;background:#ACA899"></div>
<div class="" style="left:272px;top:300px;width:1px;height:109px;background:#ACA899"></div>
<div class="" style="left:325px;top:300px;width:1px;height:109px;background:#ACA899"></div>
<div class="" style="left:420px;top:300px;width:1px;height:109px;background:#ACA899"></div>
<div class="" style="left:471px;top:300px;width:1px;height:109px;background:#ACA899"></div>
<div class="" style="left:500px;top:300px;width:1px;height:109px;background:#ACA899"></div>
<div class="" style="left:539px;top:300px;width:1px;height:109px;background:#ACA899"></div>
<div class="" style="left:597px;top:300px;width:1px;height:109px;background:#ACA899"></div>
<div class="" style="left:654px;top:300px;width:1px;height:109px;background:#ACA899"></div>
<div class="" style="left:684px;top:300px;width:1px;height:109px;background:#ACA899"></div>
<div class="" style="left:742px;top:300px;width:1px;height:109px;background:#ACA899"></div>
<div class="" style="left:797px;top:300px;width:1px;height:109px;background:#ACA899"></div>
<div class="" style="left:875px;top:300px;width:1px;height:109px;background:#ACA899"></div>
<div class="" style="left:933px;top:300px;width:1px;height:109px;background:#ACA899"></div>
<div class="" style="left:995px;top:300px;width:1px;height:109px;background:#ACA899"></div>
<div class="" style="left:1052px;top:300px;width:1px;height:109px;background:#ACA899"></div>
<div class="" style="left:1121px;top:300px;width:1px;height:109px;background:#ACA899"></div>
<div class="" style="left:203px;top:318px;width:919px;height:1px;background:#ACA899"></div>
<div class="" style="left:203px;top:336px;width:919px;height:1px;background:#ACA899"></div>
<div class="" style="left:203px;top:354px;width:919px;height:1px;background:#ACA899"></div>
<div class="" style="left:203px;top:372px;width:919px;height:1px;background:#ACA899"></div>
<div class="" style="left:203px;top:390px;width:919px;height:1px;background:#ACA899"></div>
<div class="" style="left:203px;top:408px;width:919px;height:1px;background:#ACA899"></div>
<div class="" style="left:223px;top:319px;width:49px;height:53px;background:#7A97DF"></div>
<div class="" style="left:223px;top:373px;width:49px;height:35px;background:#fff"></div>
<div class="t" style="left:203px;top:303px;width:19px;text-align:center;overflow:hidden;font-size:13px;line-height:13px;color:#000">1</div>
<div class="t" style="left:224px;top:303px;width:48px;overflow:hidden;font-size:13px;line-height:13px;color:#000">9398727</div>
<div class="t" style="left:274px;top:303px;width:51px;overflow:hidden;font-size:13px;line-height:13px;color:#000">诊察费</div>
<div class="t" style="left:327px;top:303px;width:93px;overflow:hidden;font-size:13px;line-height:13px;color:#000">普通门诊诊查费</div>
<div class="t" style="left:420px;top:303px;width:49px;text-align:right;overflow:hidden;font-size:13px;line-height:13px;color:#000">18</div>
<div class="t" style="left:473px;top:303px;width:27px;overflow:hidden;font-size:13px;line-height:13px;color:#000">次</div>
<div class="t" style="left:500px;top:303px;width:37px;text-align:right;overflow:hidden;font-size:13px;line-height:13px;color:#000">-1</div>
<div class="t" style="left:539px;top:303px;width:56px;text-align:right;overflow:hidden;font-size:13px;line-height:13px;color:#FF0000">-18</div>
<div class="t" style="left:597px;top:303px;width:55px;text-align:right;overflow:hidden;font-size:13px;line-height:13px;color:#000">-18</div>
<div class="t" style="left:656px;top:303px;width:28px;overflow:hidden;font-size:13px;line-height:13px;color:#000">0</div>
<div class="t" style="left:686px;top:303px;width:56px;overflow:hidden;font-size:13px;line-height:13px;color:#000">外一科门诊</div>
<div class="t" style="left:744px;top:303px;width:53px;overflow:hidden;font-size:13px;line-height:13px;color:#000">李元德</div>
<div class="t" style="left:799px;top:303px;width:76px;overflow:hidden;font-size:13px;line-height:13px;color:#000">2017-02-22</div>
<div class="t" style="left:877px;top:303px;width:56px;overflow:hidden;font-size:13px;line-height:13px;color:#000">外一科门诊</div>
<div class="t" style="left:935px;top:303px;width:60px;overflow:hidden;font-size:13px;line-height:13px;color:#000">34132128</div>
<div class="t" style="left:997px;top:303px;width:55px;overflow:hidden;font-size:13px;line-height:13px;color:#000">已记账</div>
<div class="t" style="left:1054px;top:303px;width:67px;overflow:hidden;font-size:13px;line-height:13px;color:#000">普通门诊诊查费</div>
<div class="t" style="left:203px;top:322px;width:19px;text-align:center;overflow:hidden;font-size:13px;line-height:13px;color:#000">2</div>
<div class="t" style="left:224px;top:322px;width:48px;overflow:hidden;font-size:13px;line-height:13px;color:#000">9400922</div>
<div class="t" style="left:274px;top:322px;width:51px;overflow:hidden;font-size:13px;line-height:13px;color:#000">检查费</div>
<div class="t" style="left:327px;top:322px;width:93px;overflow:hidden;font-size:13px;line-height:13px;color:#000">数字化摄影(DR)</div>
<div class="t" style="left:420px;top:322px;width:49px;text-align:right;overflow:hidden;font-size:13px;line-height:13px;color:#000">27</div>
<div class="t" style="left:473px;top:322px;width:27px;overflow:hidden;font-size:13px;line-height:13px;color:#000">曝光</div>
<div class="t" style="left:500px;top:322px;width:37px;text-align:right;overflow:hidden;font-size:13px;line-height:13px;color:#000">1</div>
<div class="t" style="left:539px;top:322px;width:56px;text-align:right;overflow:hidden;font-size:13px;line-height:13px;color:#0000FF">27</div>
<div class="t" style="left:597px;top:322px;width:55px;text-align:right;overflow:hidden;font-size:13px;line-height:13px;color:#000">27</div>
<div class="t" style="left:656px;top:322px;width:28px;overflow:hidden;font-size:13px;line-height:13px;color:#000">20</div>
<div class="t" style="left:686px;top:322px;width:56px;overflow:hidden;font-size:13px;line-height:13px;color:#000">康复科门诊</div>
<div class="t" style="left:744px;top:322px;width:53px;overflow:hidden;font-size:13px;line-height:13px;color:#000">江长征</div>
<div class="t" style="left:799px;top:322px;width:76px;overflow:hidden;font-size:13px;line-height:13px;color:#000">2017-02-22</div>
<div class="t" style="left:877px;top:322px;width:56px;overflow:hidden;font-size:13px;line-height:13px;color:#000">影像科</div>
<div class="t" style="left:935px;top:322px;width:60px;overflow:hidden;font-size:13px;line-height:13px;color:#000">34132127</div>
<div class="t" style="left:997px;top:322px;width:55px;overflow:hidden;font-size:13px;line-height:13px;color:#000">未记账</div>
<div class="t" style="left:1054px;top:322px;width:67px;overflow:hidden;font-size:13px;line-height:13px;color:#000">鼻骨侧位片</div>
<div class="t" style="left:203px;top:340px;width:19px;text-align:center;overflow:hidden;font-size:13px;line-height:13px;color:#000">3</div>
<div class="t" style="left:274px;top:340px;width:51px;overflow:hidden;font-size:13px;line-height:13px;color:#000">其他费</div>
<div class="t" style="left:327px;top:340px;width:93px;overflow:hidden;font-size:13px;line-height:13px;color:#000">胶片</div>
<div class="t" style="left:420px;top:340px;width:49px;text-align:right;overflow:hidden;font-size:13px;line-height:13px;color:#000">20.7</div>
<div class="t" style="left:473px;top:340px;width:27px;overflow:hidden;font-size:13px;line-height:13px;color:#000">片</div>
<div class="t" style="left:500px;top:340px;width:37px;text-align:right;overflow:hidden;font-size:13px;line-height:13px;color:#000">1</div>
<div class="t" style="left:539px;top:340px;width:56px;text-align:right;overflow:hidden;font-size:13px;line-height:13px;color:#0000FF">20.7</div>
<div class="t" style="left:597px;top:340px;width:55px;text-align:right;overflow:hidden;font-size:13px;line-height:13px;color:#000">20.7</div>
<div class="t" style="left:656px;top:340px;width:28px;overflow:hidden;font-size:13px;line-height:13px;color:#000">40</div>
<div class="t" style="left:686px;top:340px;width:56px;overflow:hidden;font-size:13px;line-height:13px;color:#000">康复科门诊</div>
<div class="t" style="left:744px;top:340px;width:53px;overflow:hidden;font-size:13px;line-height:13px;color:#000">江长征</div>
<div class="t" style="left:799px;top:340px;width:76px;overflow:hidden;font-size:13px;line-height:13px;color:#000">2017-02-22</div>
<div class="t" style="left:877px;top:340px;width:56px;overflow:hidden;font-size:13px;line-height:13px;color:#000">影像科</div>
<div class="t" style="left:935px;top:340px;width:60px;overflow:hidden;font-size:13px;line-height:13px;color:#000">34132127</div>
<div class="t" style="left:997px;top:340px;width:55px;overflow:hidden;font-size:13px;line-height:13px;color:#000">未记账</div>
<div class="t" style="left:203px;top:358px;width:19px;text-align:center;overflow:hidden;font-size:13px;line-height:13px;color:#000">4</div>
<div class="t" style="left:274px;top:358px;width:51px;overflow:hidden;font-size:13px;line-height:13px;color:#000">诊察费</div>
<div class="t" style="left:327px;top:358px;width:93px;overflow:hidden;font-size:13px;line-height:13px;color:#000">普通门诊诊查费</div>
<div class="t" style="left:420px;top:358px;width:49px;text-align:right;overflow:hidden;font-size:13px;line-height:13px;color:#000">18</div>
<div class="t" style="left:473px;top:358px;width:27px;overflow:hidden;font-size:13px;line-height:13px;color:#000">次</div>
<div class="t" style="left:500px;top:358px;width:37px;text-align:right;overflow:hidden;font-size:13px;line-height:13px;color:#000">1</div>
<div class="t" style="left:539px;top:358px;width:56px;text-align:right;overflow:hidden;font-size:13px;line-height:13px;color:#000">18</div>
<div class="t" style="left:597px;top:358px;width:55px;text-align:right;overflow:hidden;font-size:13px;line-height:13px;color:#000">18</div>
<div class="t" style="left:656px;top:358px;width:28px;overflow:hidden;font-size:13px;line-height:13px;color:#000">0</div>
<div class="t" style="left:686px;top:358px;width:56px;overflow:hidden;font-size:13px;line-height:13px;color:#000">康复科门诊</div>
<div class="t" style="left:744px;top:358px;width:53px;overflow:hidden;font-size:13px;line-height:13px;color:#000">江长征</div>
<div class="t" style="left:799px;top:358px;width:76px;overflow:hidden;font-size:13px;line-height:13px;color:#000">2017-02-22</div>
<div class="t" style="left:877px;top:358px;width:56px;overflow:hidden;font-size:13px;line-height:13px;color:#000">康复科门诊</div>
<div class="t" style="left:935px;top:358px;width:60px;overflow:hidden;font-size:13px;line-height:13px;color:#000">34132122</div>
<div class="t" style="left:997px;top:358px;width:55px;overflow:hidden;font-size:13px;line-height:13px;color:#000">已记账</div>
<div class="t" style="left:1054px;top:358px;width:67px;overflow:hidden;font-size:13px;line-height:13px;color:#000">普通门诊诊查费</div>
<div class="t" style="left:203px;top:376px;width:19px;text-align:center;overflow:hidden;font-size:13px;line-height:13px;color:#000">5</div>
<div class="t" style="left:224px;top:376px;width:48px;overflow:hidden;font-size:13px;line-height:13px;color:#000">9400923</div>
<div class="t" style="left:274px;top:376px;width:51px;overflow:hidden;font-size:13px;line-height:13px;color:#000">检查费</div>
<div class="t" style="left:327px;top:376px;width:93px;overflow:hidden;font-size:13px;line-height:13px;color:#000">床旁B超检查</div>
<div class="t" style="left:420px;top:376px;width:49px;text-align:right;overflow:hidden;font-size:13px;line-height:13px;color:#000">24</div>
<div class="t" style="left:473px;top:376px;width:27px;overflow:hidden;font-size:13px;line-height:13px;color:#000">半小时</div>
<div class="t" style="left:500px;top:376px;width:37px;text-align:right;overflow:hidden;font-size:13px;line-height:13px;color:#000">1</div>
<div class="t" style="left:539px;top:376px;width:56px;text-align:right;overflow:hidden;font-size:13px;line-height:13px;color:#0000FF">24</div>
<div class="t" style="left:597px;top:376px;width:55px;text-align:right;overflow:hidden;font-size:13px;line-height:13px;color:#000">24</div>
<div class="t" style="left:656px;top:376px;width:28px;overflow:hidden;font-size:13px;line-height:13px;color:#000">0</div>
<div class="t" style="left:686px;top:376px;width:56px;overflow:hidden;font-size:13px;line-height:13px;color:#000">外一科门诊</div>
<div class="t" style="left:744px;top:376px;width:53px;overflow:hidden;font-size:13px;line-height:13px;color:#000">李元德</div>
<div class="t" style="left:799px;top:376px;width:76px;overflow:hidden;font-size:13px;line-height:13px;color:#000">2017-02-22</div>
<div class="t" style="left:877px;top:376px;width:56px;overflow:hidden;font-size:13px;line-height:13px;color:#000">B超室</div>
<div class="t" style="left:935px;top:376px;width:60px;overflow:hidden;font-size:13px;line-height:13px;color:#000">34132130</div>
<div class="t" style="left:997px;top:376px;width:55px;overflow:hidden;font-size:13px;line-height:13px;color:#000">未记账</div>
<div class="t" style="left:1054px;top:376px;width:67px;overflow:hidden;font-size:13px;line-height:13px;color:#000">床旁B超检查</div>
<div class="t" style="left:203px;top:394px;width:19px;text-align:center;overflow:hidden;font-size:13px;line-height:13px;color:#000">6</div>
<div class="t" style="left:274px;top:394px;width:51px;overflow:hidden;font-size:13px;line-height:13px;color:#000">诊察费</div>
<div class="t" style="left:327px;top:394px;width:93px;overflow:hidden;font-size:13px;line-height:13px;color:#000">普通门诊诊查费</div>
<div class="t" style="left:420px;top:394px;width:49px;text-align:right;overflow:hidden;font-size:13px;line-height:13px;color:#000">18</div>
<div class="t" style="left:473px;top:394px;width:27px;overflow:hidden;font-size:13px;line-height:13px;color:#000">次</div>
<div class="t" style="left:500px;top:394px;width:37px;text-align:right;overflow:hidden;font-size:13px;line-height:13px;color:#000">1</div>
<div class="t" style="left:539px;top:394px;width:56px;text-align:right;overflow:hidden;font-size:13px;line-height:13px;color:#000">18</div>
<div class="t" style="left:597px;top:394px;width:55px;text-align:right;overflow:hidden;font-size:13px;line-height:13px;color:#000">18</div>
<div class="t" style="left:656px;top:394px;width:28px;overflow:hidden;font-size:13px;line-height:13px;color:#000">0</div>
<div class="t" style="left:686px;top:394px;width:56px;overflow:hidden;font-size:13px;line-height:13px;color:#000">外一科门诊</div>
<div class="t" style="left:744px;top:394px;width:53px;overflow:hidden;font-size:13px;line-height:13px;color:#000">李元德</div>
<div class="t" style="left:799px;top:394px;width:76px;overflow:hidden;font-size:13px;line-height:13px;color:#000">2017-02-22</div>
<div class="t" style="left:877px;top:394px;width:56px;overflow:hidden;font-size:13px;line-height:13px;color:#000">外一科门诊</div>
<div class="t" style="left:935px;top:394px;width:60px;overflow:hidden;font-size:13px;line-height:13px;color:#000">34132129</div>
<div class="t" style="left:997px;top:394px;width:55px;overflow:hidden;font-size:13px;line-height:13px;color:#000">已记账</div>
<div class="t" style="left:1054px;top:394px;width:67px;overflow:hidden;font-size:13px;line-height:13px;color:#000">普通门诊诊查费</div>
<div class="" style="left:203px;top:603px;width:919px;height:25px;background:#ECE9D8;border-top:1px solid #ACA899;border-right:1px solid #ACA899"></div>
<div class="" style="left:222px;top:604px;width:1px;height:23px;background:#fff;border-left:1px solid #CBC7B2;width:2px"></div>
<div class="" style="left:541px;top:605px;width:57px;height:21px;background:#F6F5EE;border:1px solid #C9C5B0"></div>
<div class="t m" style="left:557px;top:610px;font-size:12px">89.70</div>
<div class="" style="left:203px;top:628px;width:1067px;height:1px;background:#7F9DB9"></div>
<div class="" style="left:203px;top:629px;width:1067px;height:80px;background:#F0F7FD"></div>
<div class="" style="left:203px;top:630px;width:1068px;height:24px;background:#F0F7FD;border:1px solid #D0CDBE;border-radius:4px"></div>
<div class="" style="left:203px;top:630px;width:288px;height:23px;background:#ECE9D8;border:1px solid #D0CDBE;border-radius:4px"></div>
<div class="" style="left:491px;top:630px;width:308px;height:23px;background:#ECE9D8;border:1px solid #D0CDBE;border-radius:4px"></div>
<div class="t" style="left:207px;top:635px;font-size:13px;line-height:13px">扣费日期</div>
<div class="" style="left:262px;top:631px;width:96px;height:21px;background:#fff"></div>
<div class="t" style="left:264px;top:635px;font-size:13px;line-height:13px;letter-spacing:.35px">2017-02-22</div>
<div class="" style="left:342px;top:632px;width:15px;height:19px;background:#A5C0F2"></div>
<svg style="position:absolute;left:345px;top:639px" width="9" height="5"><path d="M0 0 H9 L4.5 5 Z" fill="#000"/></svg>
<div class="t" style="left:365px;top:633px;font-size:15px;line-height:15px">至</div>
<div class="" style="left:383px;top:631px;width:98px;height:21px;background:#fff"></div>
<div class="t" style="left:385px;top:635px;font-size:13px;line-height:13px;letter-spacing:.35px">2017-02-22</div>
<div class="" style="left:465px;top:632px;width:15px;height:19px;background:#A5C0F2"></div>
<svg style="position:absolute;left:468px;top:639px" width="9" height="5"><path d="M0 0 H9 L4.5 5 Z" fill="#000"/></svg>
<div class="" style="left:496px;top:636px;width:11px;height:11px;background:#fff;border:1px solid #1C1C1C"></div>
<svg style="position:absolute;left:497px;top:637px" width="9" height="9"><path d="M1.5 4.5 L3.8 7 L8 1.5" stroke="#000" stroke-width="1.8" fill="none"/></svg>
<div class="t" style="left:510px;top:635px;font-size:13px;line-height:13px">未扣费日期</div>
<div class="" style="left:580px;top:631px;width:92px;height:21px;background:#fff"></div>
<div class="t" style="left:582px;top:635px;font-size:13px;line-height:13px;letter-spacing:.35px">2017-02-22</div>
<div class="" style="left:656px;top:632px;width:15px;height:19px;background:#A5C0F2"></div>
<svg style="position:absolute;left:659px;top:639px" width="9" height="5"><path d="M0 0 H9 L4.5 5 Z" fill="#000"/></svg>
<div class="t" style="left:678px;top:633px;font-size:15px;line-height:15px">至</div>
<div class="" style="left:698px;top:631px;width:94px;height:21px;background:#fff"></div>
<div class="t" style="left:700px;top:635px;font-size:13px;line-height:13px;letter-spacing:.35px">2017-02-22</div>
<div class="" style="left:776px;top:632px;width:15px;height:19px;background:#A5C0F2"></div>
<svg style="position:absolute;left:779px;top:639px" width="9" height="5"><path d="M0 0 H9 L4.5 5 Z" fill="#000"/></svg>
<div class="" style="left:203px;top:654px;width:1067px;height:24px;background:#F0F7FD"></div>
<div class="" style="left:203px;top:655px;width:332px;height:23px;background:#F0F7FD;border:1px solid #D2CFC2;border-radius:4px"></div>
<div class="" style="left:535px;top:655px;width:333px;height:23px;background:#F0F7FD;border:1px solid #D2CFC2;border-radius:4px"></div>
<div class="t" style="left:207px;top:660px;color:#0A246A;font-weight:bold;font-size:13px;line-height:13px">未扣合计</div>
<div class="t m" style="left:267px;top:660px;color:#0000FF;font-weight:bold;font-size:13px;line-height:13px">47.70</div>
<div class="t" style="left:331px;top:660px;color:#0A246A;font-weight:bold;font-size:13px;line-height:13px">自付</div>
<div class="t m" style="left:362px;top:660px;color:#0000FF;font-weight:bold;font-size:13px;line-height:13px">47.70</div>
<div class="t" style="left:427px;top:660px;color:#0A246A;font-weight:bold;font-size:13px;line-height:13px">记账</div>
<div class="t m" style="left:458px;top:660px;color:#0000FF;font-weight:bold;font-size:13px;line-height:13px">0.00</div>
<div class="t" style="left:541px;top:660px;color:#0A246A;font-weight:bold;font-size:13px;line-height:13px">已扣合计</div>
<div class="t m" style="left:602px;top:660px;color:#000;font-weight:bold;font-size:13px;line-height:13px">18.00</div>
<div class="t" style="left:664px;top:660px;color:#0A246A;font-weight:bold;font-size:13px;line-height:13px">自付</div>
<div class="t m" style="left:697px;top:660px;color:#000;font-weight:bold;font-size:13px;line-height:13px">18.00</div>
<div class="t" style="left:759px;top:660px;color:#0A246A;font-weight:bold;font-size:13px;line-height:13px">记账</div>
<div class="t m" style="left:791px;top:660px;color:#000;font-weight:bold;font-size:13px;line-height:13px">0.00</div>
<div class="" style="left:203px;top:678px;width:1067px;height:31px;background:#F0F7FD;border-top:1px solid #C9C5B4"></div>
<div class="" style="left:212px;top:689px;width:11px;height:11px;background:#fff;border:1px solid #000"></div>
<div class="t" style="left:227px;top:687px;font-weight:bold;font-size:13px;line-height:13px">分次结算</div>
<div class="" style="left:298px;top:688px;width:12px;height:12px;background:#fff;border:1px solid #333;border-radius:50%"></div>
<div class="t" style="left:313px;top:688px;font-size:12px;line-height:12px">留账(<u>I</u>)</div>
<div class="" style="left:365px;top:688px;width:12px;height:12px;background:#fff;border:1px solid #333;border-radius:50%"></div>
<div class="t" style="left:380px;top:688px;font-size:12px;line-height:12px">清账(<u>Z</u>)</div>
<div class="" style="left:433px;top:688px;width:12px;height:12px;background:#fff;border:1px solid #333;border-radius:50%"></div>
<div class="t" style="left:448px;top:688px;font-size:12px;line-height:12px">退卡(<u>T</u>)</div>
<div class="" style="left:302px;top:692px;width:4px;height:4px;background:#000;border-radius:50%"></div>
<div class="" style="left:1076px;top:687px;width:11px;height:11px;background:#F0F0E8;border:1px solid #C2BEAE"></div>
<svg style="position:absolute;left:1078px;top:689px" width="8" height="8"><path d="M1 4 L3 6.5 L7 1" stroke="#B5B09C" stroke-width="1.6" fill="none"/></svg>
<div class="t" style="left:1091px;top:686px;color:#AAA591;font-weight:bold;font-size:13px;line-height:13px">打印发票</div>
<div class="" style="left:1154px;top:684px;width:90px;height:20px;background:#fff;border:1px solid #B6AF98"></div>
<div class="t" style="left:1157px;top:688px;font-size:13px;line-height:13px">0</div>
<div class="" style="left:0px;top:709px;width:1356px;height:3px;background:#2F62C4"></div>
<div class="" style="left:1271px;top:128px;width:85px;height:581px;background:#fff"></div>
<div class="" style="left:1272px;top:129px;width:84px;height:580px;background:#FEFEE3"></div>
<div class="" style="left:1279px;top:151px;width:72px;height:28px;background:#F2F1EA;border:1px solid #CBC8BA;border-radius:3px"></div>
<div class="t" style="left:1279px;top:155px;width:72px;text-align:center;color:#B1AC98;font-size:16px;line-height:16px;">结算<span class="m" style="font-size:13.5px">(<u>Q</u>)</span></div>
<div class="" style="left:1279px;top:194px;width:72px;height:19px;background:linear-gradient(#FFFFFF,#F3F2EC 60%,#DCD8C8);border:1px solid #1E4D8E;border-radius:3px"></div>
<div class="t" style="left:1279px;top:196px;width:72px;text-align:center;font-size:14px;line-height:14px;font-size:15px;line-height:14px">&nbsp;&nbsp;&nbsp;&nbsp;刷新<span class="m" style="font-size:12.5px">(<u>R</u>)</span></div>
<svg style="position:absolute;left:1281px;top:197px" width="14" height="14" viewBox="0 0 14 14"><path d="M7.5 2 A5.2 5.2 0 1 1 3 10.5" stroke="#7C9ED8" stroke-width="3.6" fill="none"/><path d="M7.5 2 A5.2 5.2 0 0 1 12.7 7" stroke="#A8C0EC" stroke-width="3.6" fill="none"/><path d="M0.5 6.5 L1 13.5 L7 12Z" fill="#3460B0"/></svg>
<div class="" style="left:1279px;top:233px;width:72px;height:23px;background:linear-gradient(#FFFFFF,#F3F2EC 60%,#DCD8C8);border:1px solid #1E4D8E;border-radius:3px"></div>
<div class="t" style="left:1279px;top:237px;width:72px;text-align:center;font-size:14px;line-height:14px;">预交金(<u>S</u>)</div>
<div class="" style="left:1279px;top:366px;width:72px;height:19px;background:linear-gradient(#FFFFFF,#F3F2EC 60%,#DCD8C8);border:1px solid #1E4D8E;border-radius:3px"></div>
<div class="t" style="left:1279px;top:368px;width:72px;text-align:center;font-size:14px;line-height:14px;">退药开单</div>
<div class="" style="left:1279px;top:403px;width:11px;height:11px;background:#fff;border:1px solid #000"></div>
<svg style="position:absolute;left:1280px;top:404px" width="9" height="9"><path d="M1.5 4.5 L3.8 7 L8 1.5" stroke="#000" stroke-width="1.8" fill="none"/></svg>
<div class="t" style="left:1294px;top:400px;font-weight:bold;font-size:13px;line-height:13px">选择结算</div>
<div class="" style="left:1283px;top:451px;width:66px;height:19px;background:linear-gradient(#FFFFFF,#F3F2EC 60%,#DCD8C8);border:1px solid #1E4D8E;border-radius:3px"></div>
<div class="t" style="left:1283px;top:453px;width:66px;text-align:center;font-size:14px;line-height:14px;">再次选择</div>
<div class="" style="left:1281px;top:632px;width:11px;height:11px;background:#fff;border:1px solid #000"></div>
<div class="t" style="left:1295px;top:631px;font-size:13px;line-height:13px">不发医保</div>
<div class="" style="left:1279px;top:676px;width:72px;height:23px;background:linear-gradient(#FFFFFF,#F3F2EC 60%,#DCD8C8);border:1px solid #1E4D8E;border-radius:3px"></div>
<div class="t" style="left:1279px;top:680px;width:72px;text-align:center;font-size:14px;line-height:14px;font-size:15px;line-height:14px">&nbsp;&nbsp;&nbsp;&nbsp;退出<span class="m" style="font-size:12.5px">(<u>X</u>)</span></div>
<svg style="position:absolute;left:1281px;top:679px" width="14" height="16" viewBox="0 0 14 16"><circle cx="7" cy="9" r="6" fill="#F02020"/><path d="M2 9 A5 5 0 0 1 12 9" fill="#D06018"/><rect x="5" y="1" width="4" height="8" fill="#C05010" stroke="#fff" stroke-width=".8"/></svg>
<div class="" style="left:344px;top:416px;width:516px;height:175px;background:#0A1EA0"></div>
<div class="" style="left:344px;top:416px;width:516px;height:21px;background:linear-gradient(#4A9CFF 0%,#0A6AF4 12%,#0A62EE 40%,#0558E6 75%,#0A4ED8 100%)"></div>
<div class="" style="left:780px;top:418px;width:78px;height:18px;background:linear-gradient(90deg,rgba(10,60,210,0),rgba(10,60,210,.55) 60%,rgba(10,60,210,.3))"></div>
<div class="t" style="left:347px;top:421px;color:#fff;font-weight:bold;font-size:13px;line-height:13px">提示</div>
<div class="" style="left:347px;top:437px;width:510px;height:151px;background:#F0F8FF"></div>
<div class="" style="left:347px;top:437px;width:510px;height:102px;background:#F0F8FF;border:1px solid #0A1C78;box-shadow:inset 1px 1px #fff, inset -1px -1px #fff"></div>
<div class="t" style="left:350px;top:440px;font-size:19.15px;line-height:19px">医保支付<span class="m" style="font-size:16.6px">:65.70</span>元<span class="m" style="font-size:16.6px">(</span>个人账户<span class="m" style="font-size:16.6px">:47.70</span>元<span class="m" style="font-size:16.6px">,</span>医保统筹<span class="m" style="font-size:16.6px">:18.00</span>元<span class="m" style="font-size:16.6px">)</span></div>
<div class="t" style="left:350px;top:459px;font-size:19.15px;line-height:19px">账户余额不足<span class="m" style="font-size:16.6px">: </span>需补交【<span class="m" style="font-size:16.6px">17.85</span>】元<span class="m" style="font-size:16.6px">!</span>是否补交预交金<span class="m" style="font-size:16.6px">?</span></div>
<div class="" style="left:490px;top:550px;width:75px;height:25px;background:linear-gradient(#FFFFFF,#F2F1EB 70%,#DCD8C8);border:1px solid #1F4C8C;border-radius:3px;box-shadow:inset 0 -2px #6A9AE8, inset 1px 0 #C8DCF8, inset -1px 0 #C8DCF8"></div>
<div class="" style="left:492px;top:552px;width:71px;height:21px;border:1px dotted #554"></div>
<div class="t" style="left:490px;top:553px;width:75px;text-align:center;font-size:18px;line-height:18px">是<span class="m" style="font-size:15.8px">(<u>Y</u>)</span></div>
<div class="" style="left:677px;top:550px;width:75px;height:25px;background:linear-gradient(#FFFFFF,#F2F1EB 70%,#DCD8C8);border:1px solid #1F4C8C;border-radius:3px"></div>
<div class="t" style="left:677px;top:553px;width:75px;text-align:center;font-size:18px;line-height:18px">否<span class="m" style="font-size:15.8px">(<u>N</u>)</span></div>
</body></html>
